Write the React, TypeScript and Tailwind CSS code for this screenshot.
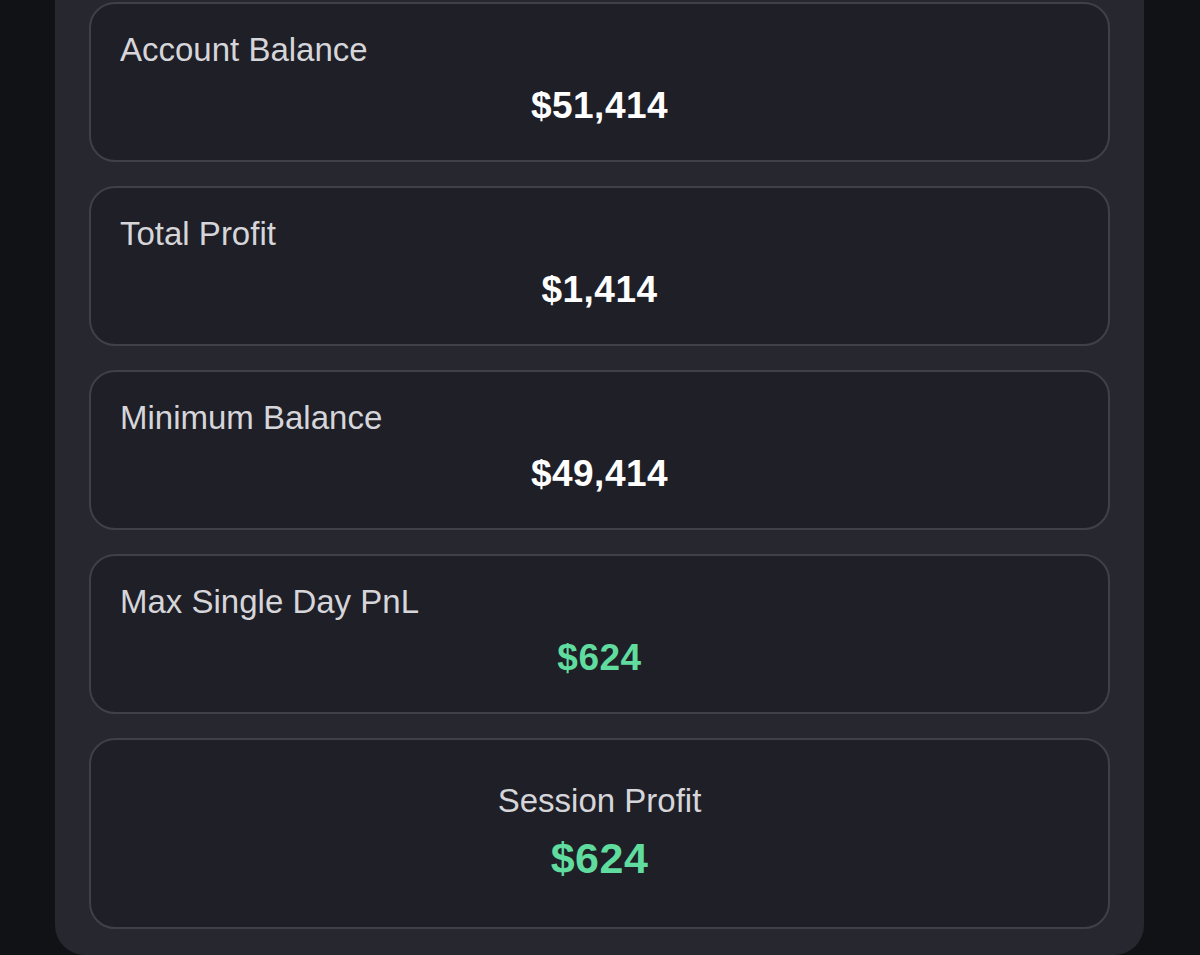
const font = { fontFamily: '"Liberation Sans", Arial, sans-serif' };

type Stat = { label: string; value: string; green?: boolean };

const stats: Stat[] = [
  { label: "Account Balance", value: "$51,414" },
  { label: "Total Profit", value: "$1,414" },
  { label: "Minimum Balance", value: "$49,414" },
  { label: "Max Single Day PnL", value: "$624", green: true },
];

function StatCard({ label, value, green }: Stat) {
  return (
    <div className="h-[160px] rounded-[26px] border-2 border-[#3f404a] bg-[#1f1f28] pl-[29px] pr-[29px] pt-[27px]">
      <div className="text-[33px] leading-[38px] text-[#d6d6da]">{label}</div>
      <div
        className={
          "mt-[15px] text-center text-[37px] leading-[43px] font-bold tracking-[0.5px] " +
          (green ? "text-[#5fdc9e]" : "text-white")
        }
      >
        {value}
      </div>
    </div>
  );
}

export default function App() {
  return (
    <div className="h-[955px] w-[1200px] overflow-hidden bg-[#111216]" style={font}>
      <div className="ml-[55px] h-[955px] w-[1089px] rounded-b-[30px] bg-[#27272f] px-[34px] pt-[2px] pb-[26px]">
        <div className="flex flex-col gap-[24px]">
          {stats.map((s) => (
            <StatCard key={s.label} {...s} />
          ))}

          {/* session profit */}
          <div className="h-[191px] rounded-[26px] border-2 border-[#3f404a] bg-[#1f1f28] pt-[42px] text-center">
            <div className="text-[33px] leading-[38px] text-[#d6d6da]">Session Profit</div>
            <div className="mt-[14px] text-[43px] leading-[49px] font-bold tracking-[0.5px] text-[#5fdc9e]">
              $624
            </div>
          </div>
        </div>
      </div>
    </div>
  );
}
